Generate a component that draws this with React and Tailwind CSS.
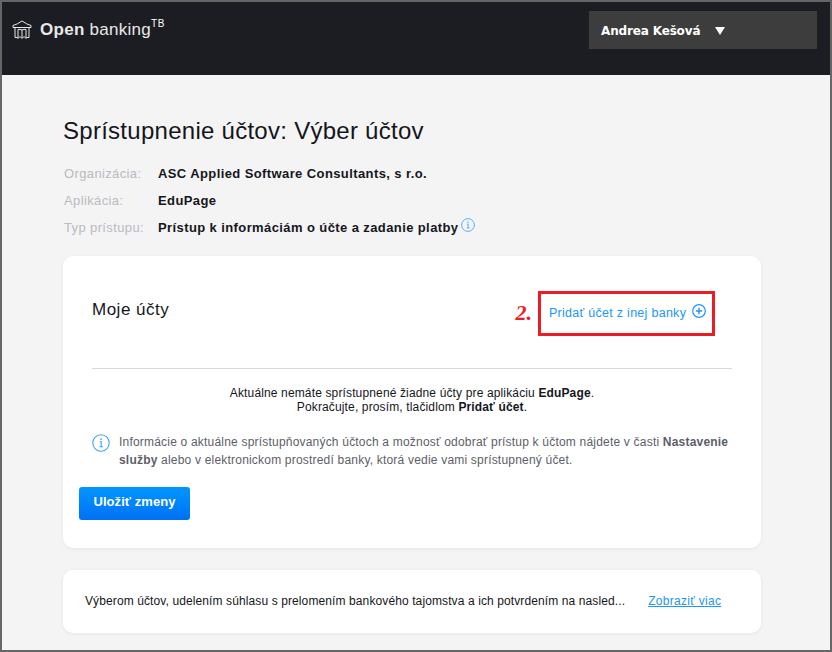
import React from "react";

const BankLogo = () => (
  <svg width="20" height="20" viewBox="0 0 20 20" fill="none" stroke="#e8e8e8" strokeWidth="1" strokeLinejoin="round">
    <path d="M1 5.5 Q5 4.5 10 1 Q15 4.5 19 5.5 V7.5 H1 Z" />
    <path d="M3 7.5 V17.5 H5.5 M17 7.5 V17.5 H14.5" />
    <path d="M6 9.5 Q8 8.8 10 10 Q12 8.8 14 9.5 V18.5 L12 16.5 L10 18.5 L8 16.5 L6 18.5 Z" />
    <path d="M10 10 V18" />
  </svg>
);

const InfoIcon = ({ size = 14 }) => (
  <svg width={size} height={size} viewBox="0 0 18 18" fill="none" stroke="#3ba4f5" strokeWidth="1.1">
    <circle cx="9" cy="9" r="8.2" />
    <path d="M7.6 7.8 H9.2 V12.6 M7.4 12.8 H11" />
    <path d="M9 4.6 V6" strokeWidth="1.5" />
  </svg>
);

const PlusIcon = () => (
  <svg width="14" height="14" viewBox="0 0 14 14" fill="none" stroke="#2196f3" strokeWidth="1.2">
    <circle cx="7" cy="7" r="6.3" />
    <path d="M7 3.8 V10.2 M3.8 7 H10.2" strokeWidth="1.4" />
  </svg>
);

const InfoRow = ({ label, children }) => (
  <div className="flex h-[27px] items-center text-[13px]">
    <span className="w-[94px] shrink-0 tracking-[0.37px] text-[#b9bac2]">{label}</span>
    <span className="flex items-center font-bold tracking-[0.4px] text-[#15161c]">{children}</span>
  </div>
);

export default function App() {
  return (
    <div className="h-[652px] w-[832px] overflow-hidden border-2 border-[#666666] bg-[#f4f4f4] font-['Liberation_Sans',Arial,sans-serif]">
      {/* Header */}
      <header className="flex h-[73px] items-start justify-between bg-[#1c1d22] pl-[10px] pr-[13px]">
        <div className="flex items-center pt-[16px]">
          <BankLogo />
          <span className="ml-[8px] text-[17px] leading-[24px] tracking-[0.28px] text-[#e8e8e8]">
            <b className="font-bold">Open</b> banking
            <sup className="relative top-[-1px] align-super text-[10px] leading-none tracking-[0.5px] text-white">TB</sup>
          </span>
        </div>
        <div className="mt-[9px] flex h-[38px] w-[228px] items-center bg-[#3d3d3d] pl-[12px] pt-[2px] font-['DejaVu_Sans',Verdana,sans-serif] text-[12px] font-bold tracking-[-0.15px] text-white">
          Andrea Kešová
          <span className="ml-[15px] h-0 w-0 border-x-[5px] border-t-[8px] border-x-transparent border-t-white" />
        </div>
      </header>

      <main className="px-[61px]">
        <h1 className="pt-[41px] text-[24px] leading-[30px] tracking-[0.27px] text-[#15161c]">
          Sprístupnenie účtov: Výber účtov
        </h1>

        <div className="mt-[14px] pl-[1px]">
          <InfoRow label="Organizácia:">ASC Applied Software Consultants, s r.o.</InfoRow>
          <InfoRow label="Aplikácia:">EduPage</InfoRow>
          <InfoRow label="Typ prístupu:">
            Prístup k informáciám o účte a zadanie platby
            <span className="ml-[3px] -mt-[6px]"><InfoIcon /></span>
          </InfoRow>
        </div>

        {/* Moje ucty */}
        <section className="mt-[15px] h-[292px] w-[698px] rounded-[10px] bg-white pt-[32px] shadow-[0_1px_4px_rgba(0,0,0,0.06)]">
          <div className="mx-[29px] flex h-[81px] items-start justify-between border-b border-[#d9d9d9]">
            <h2 className="pt-[10px] text-[17px] leading-[24px] tracking-[0.5px] text-[#15161c]">Moje účty</h2>
            <div className="mr-[17px] mt-[3px] flex items-center">
              <span className="mb-[2px] mr-[6px] font-['Liberation_Serif',serif] text-[22px] font-bold italic leading-none text-[#ed1c24]">2.</span>
              <div className="flex h-[45px] w-[177px] items-center border-[3px] border-[#ed1c24] pb-[1px] pl-[8px] text-[12.5px] tracking-[0.28px] text-[#2196f3]">
                Pridať účet z inej banky
                <span className="ml-[6px] -mt-[4px]"><PlusIcon /></span>
              </div>
            </div>
          </div>

          <p className="mt-[18px] text-center text-[12px] leading-[13.5px] tracking-[0.14px] text-[#15161c]">
            Aktuálne nemáte sprístupnené žiadne účty pre aplikáciu <b>EduPage</b>.
            <br />
            Pokračujte, prosím, tlačidlom <b>Pridať účet</b>.
          </p>

          <div className="mt-[19px] flex items-start pl-[29px] pr-[24px]">
            <span className="mt-[1px] shrink-0"><InfoIcon size={18} /></span>
            <p className="ml-[9px] text-[12px] leading-[18px] tracking-[0.2px] text-[#5d5e68]">
              Informácie o aktuálne sprístupňovaných účtoch a možnosť odobrať prístup k účtom nájdete v časti <b>Nastavenie</b> <b>služby</b> alebo v elektronickom prostredí banky, ktorá vedie vami sprístupnený účet.
            </p>
          </div>

          <button className="ml-[16px] mt-[18px] h-[33px] w-[111px] rounded-[3px] bg-gradient-to-b from-[#0396ff] to-[#0070f5] pb-[3px] text-[13px] font-bold tracking-[0.05px] text-white">
            Uložiť zmeny
          </button>
        </section>

        {/* Suhlas */}
        <section className="mt-[22px] flex h-[63px] w-[698px] items-center rounded-[10px] bg-white pb-[2px] pl-[22px] text-[12px] shadow-[0_1px_4px_rgba(0,0,0,0.06)]">
          <span className="tracking-[0.107px] text-[#15161c]">Výberom účtov, udelením súhlasu s prelomením bankového tajomstva a ich potvrdením na nasled...</span>
          <a className="ml-[23px] tracking-[0.3px] text-[#2196f3] underline">Zobraziť viac</a>
        </section>
      </main>
    </div>
  );
}
